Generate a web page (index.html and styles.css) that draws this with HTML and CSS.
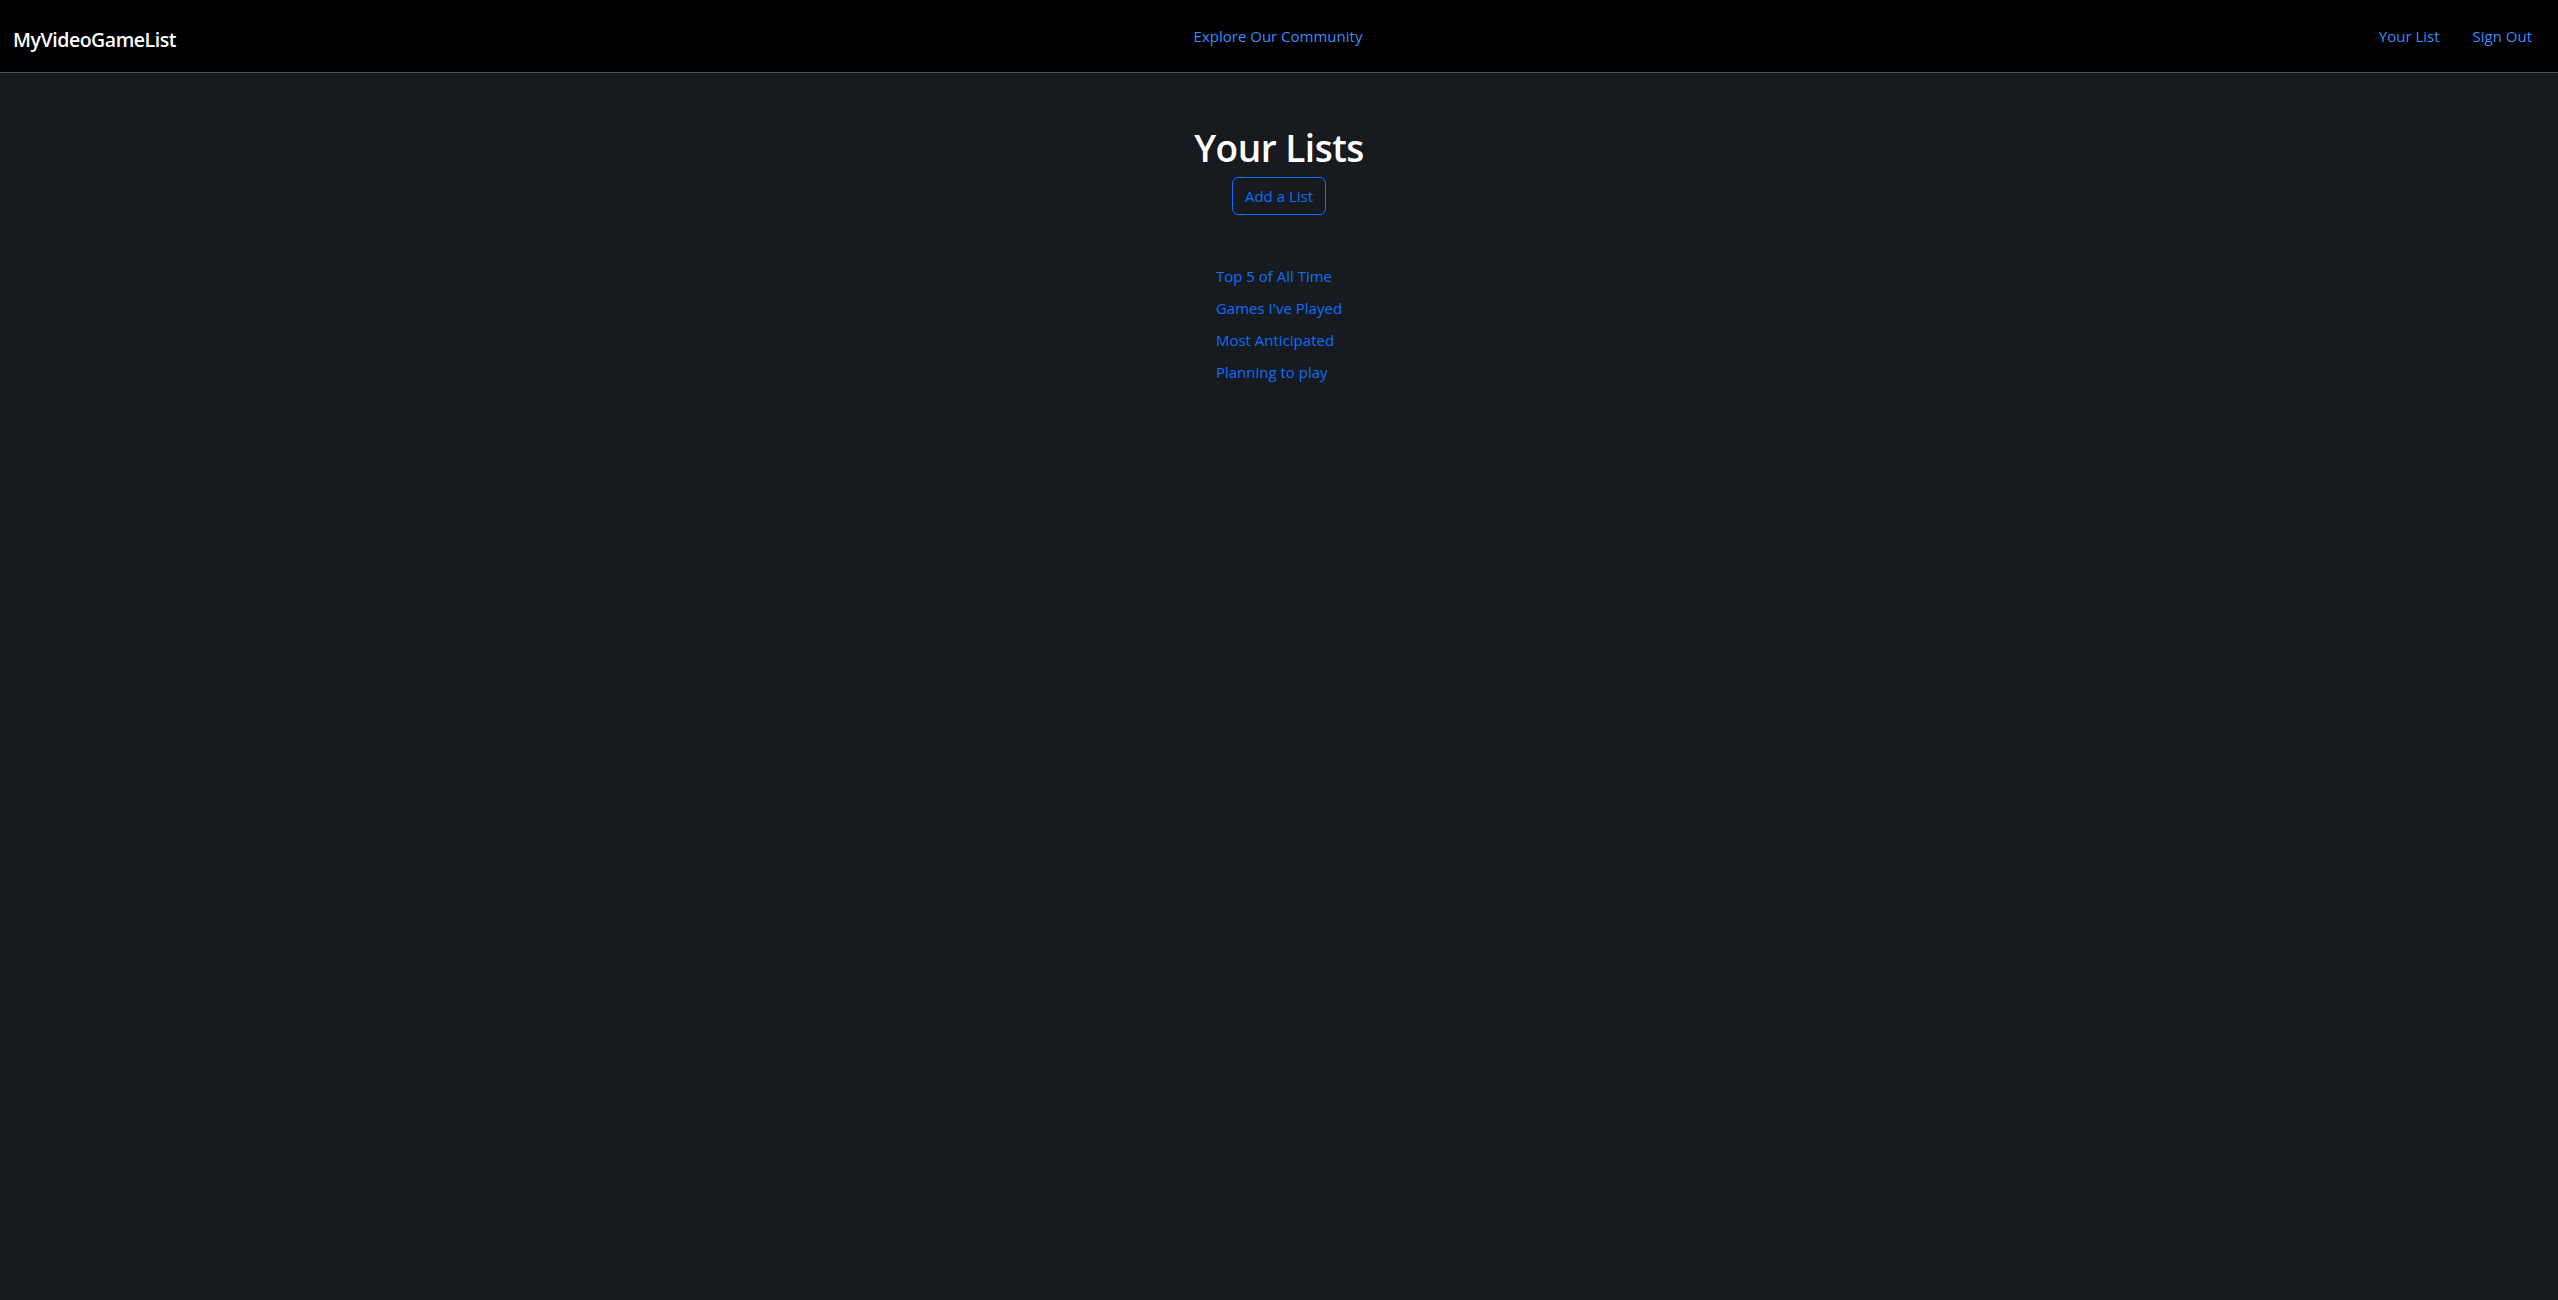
FILE: index.html
```html
<!DOCTYPE html>
<html lang="en">
<head>
<meta charset="utf-8">
<title>MyVideoGameList</title>
<link rel="stylesheet" href="styles.css">
</head>
<body>
<nav class="navbar">
  <div class="nav-left"><a class="brand" href="#">MyVideoGameList</a></div>
  <div class="nav-center"><a class="nav-link" href="#">Explore Our Community</a></div>
  <div class="nav-right">
    <a class="nav-link" href="#">Your List</a>
    <a class="nav-link" href="#">Sign Out</a>
  </div>
</nav>
<main class="content">
  <h1 class="title">Your Lists</h1>
  <a class="btn-outline" href="#">Add a List</a>
  <ul class="lists">
    <li><a href="#">Top 5 of All Time</a></li>
    <li><a href="#">Games I've Played</a></li>
    <li><a href="#">Most Anticipated</a></li>
    <li><a href="#">Planning to play</a></li>
  </ul>
</main>
</body>
</html>
```
FILE: styles.css
```css
html, body {
  margin: 0;
  padding: 0;
}
body {
  background: #171a1e;
  color: #dee2e6;
  font-family: "Open Sans", "Noto Sans", "Liberation Sans", sans-serif;
  font-size: 15px;
  line-height: 24px;
  min-height: 1300px;
}
a {
  text-decoration: none;
}
.navbar {
  display: grid;
  grid-template-columns: 1fr auto 1fr;
  height: 72px;
  background: #000;
  border-bottom: 1px solid #4b5056;
  box-sizing: content-box;
}
.nav-left {
  padding: 25px 0 0 13px;
}
.brand {
  color: #fff;
  font-size: 19.5px;
  line-height: 30px;
  font-weight: 600;
  letter-spacing: -0.45px;
}
.nav-center {
  padding-top: 24px;
  padding-right: 2px;
}
.nav-right {
  display: flex;
  justify-content: flex-end;
  gap: 33px;
  padding: 24px 26px 0 0;
}
.nav-link {
  color: #3d8bfd;
  font-size: 15px;
  line-height: 24px;
  display: block;
  height: 24px;
}
.content {
  display: flex;
  flex-direction: column;
  align-items: center;
  padding-top: 51px;
}
.title {
  margin: 0 0 5px;
  font-size: 37px;
  line-height: 48px;
  font-weight: 600;
  letter-spacing: -0.5px;
  color: #fff;
}
.btn-outline {
  display: inline-block;
  padding: 6px 12px;
  border: 1px solid #0d6efd;
  border-radius: 6px;
  color: #0d6efd;
  font-size: 15px;
  line-height: 24px;
}
.lists {
  list-style: none;
  margin: 49px 0 0;
  padding: 0;
  display: flex;
  flex-direction: column;
  gap: 8px;
}
.lists a {
  color: #0d6efd;
  font-size: 15px;
}
```
